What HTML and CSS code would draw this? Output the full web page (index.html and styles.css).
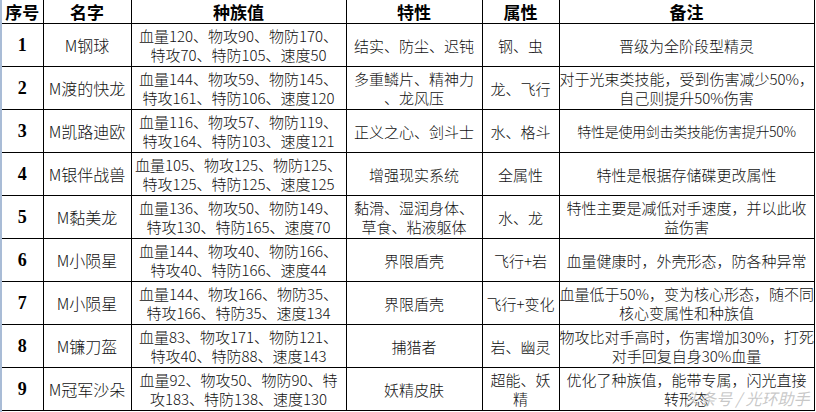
FILE: index.html
```html
<!DOCTYPE html>
<html lang="zh-CN">
<head>
<meta charset="utf-8">
<title>M精灵</title>
<link rel="stylesheet" href="styles.css">
</head>
<body>
<div class="sheet">
<table class="grid">
<colgroup>
<col class="c-no"><col class="c-name"><col class="c-stat"><col class="c-trait"><col class="c-type"><col class="c-note">
</colgroup>
<thead>
<tr><th>序号</th><th>名字</th><th>种族值</th><th>特性</th><th>属性</th><th>备注</th></tr>
</thead>
<tbody>
<tr><td class="no">1</td><td class="name">M钢球</td><td>血量120、物攻90、物防170、<br>特攻70、特防105、速度50</td><td>结实、防尘、迟钝</td><td>钢、虫</td><td>晋级为全阶段型精灵</td></tr>
<tr><td class="no">2</td><td class="name">M渡的快龙</td><td>血量144、物攻59、物防145、<br>特攻161、特防106、速度120</td><td>多重鳞片、精神力<br>、龙风压</td><td>龙、飞行</td><td>对于光束类技能，受到伤害减少50%，<br>自己则提升50%伤害</td></tr>
<tr><td class="no">3</td><td class="name">M凯路迪欧</td><td>血量116、物攻57、物防119、<br>特攻164、特防103、速度121</td><td>正义之心、剑斗士</td><td>水、格斗</td><td class="tight">特性是使用剑击类技能伤害提升50%</td></tr>
<tr><td class="no">4</td><td class="name">M银伴战兽</td><td>血量105、物攻125、物防125、<br>特攻125、特防125、速度125</td><td>增强现实系统</td><td>全属性</td><td>特性是根据存储碟更改属性</td></tr>
<tr><td class="no">5</td><td class="name">M黏美龙</td><td>血量136、物攻50、物防149、<br>特攻130、特防165、速度70</td><td>黏滑、湿润身体、<br>草食、粘液躯体</td><td>水、龙</td><td>特性主要是减低对手速度，并以此收<br>益伤害</td></tr>
<tr><td class="no">6</td><td class="name">M小陨星</td><td>血量144、物攻40、物防166、<br>特攻40、特防166、速度44</td><td>界限盾壳</td><td>飞行+岩</td><td>血量健康时，外壳形态，防各种异常</td></tr>
<tr><td class="no">7</td><td class="name">M小陨星</td><td>血量144、物攻166、物防35、<br>特攻166、特防35、速度134</td><td>界限盾壳</td><td>飞行+变化</td><td>血量低于50%，变为核心形态，随不同<br>核心变属性和种族值</td></tr>
<tr><td class="no">8</td><td class="name">M镰刀盔</td><td>血量83、物攻171、物防121、<br>特攻40、特防88、速度143</td><td>捕猎者</td><td>岩、幽灵</td><td>物攻比对手高时，伤害增加30%，打死<br>对手回复自身30%血量</td></tr>
<tr><td class="no">9</td><td class="name">M冠军沙朵</td><td>血量92、物攻50、物防90、特<br>攻183、特防138、速度130</td><td>妖精皮肤</td><td>超能、妖<br>精</td><td>优化了种族值，能带专属，闪光直接<br>转形态</td></tr>
</tbody>
</table>
<div class="mark">头条号 / 光环助手</div>
</div>
</body>
</html>
```

FILE: styles.css
```css
html, body {
  margin: 0;
  padding: 0;
  background: #ffffff;
}

.sheet {
  position: relative;
  width: 816px;
  height: 412px;
  overflow: hidden;
  border-left: 2px solid #a9bcd6;
  box-sizing: border-box;
}

.grid {
  border-collapse: collapse;
  table-layout: fixed;
  width: 812px;
  font-family: "Noto Sans CJK SC", "DejaVu Sans", sans-serif;
  font-size: 15px;
  font-weight: 300;
  color: #111111;
}

.c-no { width: 41px; }
.c-name { width: 88px; }
.c-stat { width: 215px; }
.c-trait { width: 136px; }
.c-type { width: 77px; }
.c-note { width: 255px; }

.grid th,
.grid td {
  border: 1px solid #000000;
  padding: 0;
  text-align: center;
  vertical-align: middle;
  line-height: 19px;
  white-space: nowrap;
  overflow: hidden;
}

.grid th {
  height: 23px;
  border-top: none;
  font-weight: 700;
  font-size: 17px;
  color: #000000;
}

.grid td {
  height: 42px;
}

.grid tr > :first-child {
  border-left: none;
}

.grid td.no {
  font-family: "Liberation Serif", "DejaVu Serif", serif;
  font-weight: 700;
  font-size: 18px;
  color: #000000;
}

.grid td.name {
  font-size: 16px;
}

.grid td.tight {
  font-size: 14px;
  letter-spacing: -0.3px;
}

.mark {
  position: absolute;
  left: 682px;
  top: 388px;
  font-family: "Noto Sans CJK SC", sans-serif;
  font-size: 16px;
  line-height: 20px;
  color: rgba(190, 190, 190, 0.85);
  font-style: italic;
  white-space: nowrap;
}
```
